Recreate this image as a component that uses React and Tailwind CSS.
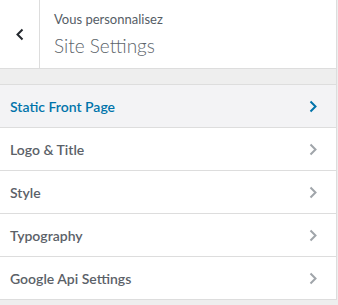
const sections = [
    { title: 'Static Front Page', active: true },
    { title: 'Logo & Title' },
    { title: 'Style' },
    { title: 'Typography' },
    { title: 'Google Api Settings' },
];

const Chevron = ({ dir = 'right', className }) => (
    <svg width="8" height="13" viewBox="0 0 8 13" className={className} fill="none" stroke="currentColor" strokeWidth="2">
        {dir === 'right' ? <path d="M1.5 1.5 L6.5 6.5 L1.5 11.5" /> : <path d="M6.5 1.5 L1.5 6.5 L6.5 11.5" />}
    </svg>
);

export default function App() {
    return (
        <div className="w-[338px] h-[305px] bg-[#eeeeee] overflow-hidden" style={{ fontFamily: 'Lato, "Noto Sans", sans-serif' }}>
            <div className="w-[337px] border-r border-[#dddddd]">
                {/* Header */}
                <div className="flex h-[69px] bg-white border-b border-[#dddddd]">
                    <button className="w-[40px] flex items-center justify-center border-r border-[#dddddd] text-[#23282d]">
                        <Chevron dir="left" />
                    </button>
                    <div className="pl-[14px] pt-[11px]">
                        <p className="text-[13px] leading-[16px] text-[#555d66]">Vous personnalisez</p>
                        <h2 className="mt-[7px] text-[19px] leading-[24px] font-light text-[#5d646b]">Site Settings</h2>
                    </div>
                </div>

                {/* Sections */}
                <div className="mt-[15px] border-t border-[#dddddd]">
                    {sections.map((s) => (
                        <div
                            key={s.title}
                            className={`flex items-center justify-between h-[43px] pl-[10px] pr-[19px] border-b border-[#dddddd] ${
                                s.active ? 'bg-[#f3f3f5] text-[#0073aa]' : 'bg-white text-[#5b6168]'
                            }`}
                        >
                            <span className="text-[14px] font-semibold">{s.title}</span>
                            <Chevron className={s.active ? 'text-[#0073aa]' : 'text-[#a0a5aa]'} />
                        </div>
                    ))}
                </div>
            </div>
        </div>
    );
}
